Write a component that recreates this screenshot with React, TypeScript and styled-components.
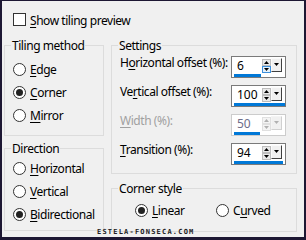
import React from "react";
import styled, { createGlobalStyle } from "styled-components";

const GlobalStyle = createGlobalStyle`
  html, body {
    margin: 0;
    padding: 0;
    background: #f0f0f0;
  }
`;

const Frame = styled.div`
  position: relative;
  width: 306px;
  height: 240px;
  box-sizing: border-box;
  border-style: solid;
  border-color: #1d1733;
  border-width: 1px 2px 3px 2px;
  background: #f0f0f0;
  overflow: hidden;
  font-family: "Noto Sans", "Segoe UI", sans-serif;
  font-size: 12px;
  letter-spacing: -0.45px;
  color: #000;
`;

const TopBar = styled.div`
  height: 37px;
  box-sizing: border-box;
  padding: 12px 0 0 11px;
`;

const CheckRow = styled.label`
  display: flex;
  align-items: flex-start;
  gap: 4px;
  line-height: 15px;
`;

const CheckBox = styled.span`
  width: 13px;
  height: 13px;
  box-sizing: border-box;
  border: 1px solid #333;
  background: #fff;
`;

const Columns = styled.div`
  display: grid;
  grid-template-columns: 100px 186px;
  column-gap: 7px;
  padding-left: 2px;
`;

const Column = styled.div`
  display: flex;
  flex-direction: column;
`;

const Group = styled.fieldset<{ $h: number; $top?: number }>`
  margin: ${(p) => p.$top ?? 0}px 0 0 0;
  padding: 0;
  height: ${(p) => p.$h}px;
  box-sizing: border-box;
  border: 1px solid #dcdcdc;
  min-inline-size: 0;
`;

const Legend = styled.legend`
  margin-left: 6px;
  padding: 0 1px;
  line-height: 15px;
  font-size: 12px;
`;

const Body = styled.div<{ $pt: number; $pl: number }>`
  padding: ${(p) => p.$pt}px 0 0 ${(p) => p.$pl}px;
`;

const Option = styled.label`
  display: flex;
  align-items: center;
  gap: 4px;
  height: 23px;
  line-height: 15px;
`;

const Radio = styled.span<{ $on?: boolean }>`
  display: grid;
  place-items: center;
  width: 13px;
  height: 13px;
  box-sizing: border-box;
  border: 1px solid #333;
  border-radius: 50%;
  background: #fff;

  &::after {
    content: "";
    width: 7px;
    height: 7px;
    border-radius: 50%;
    background: #222;
    display: ${(p) => (p.$on ? "block" : "none")};
  }
`;

const Key = styled.u`
  text-decoration: underline;
  text-underline-offset: 2px;
  text-decoration-thickness: 1px;
`;

const InlineOptions = styled.div`
  display: grid;
  grid-template-columns: 81px auto;
`;

const SettingRow = styled.div`
  display: grid;
  grid-template-columns: 111px 55px;
  height: 29px;
  align-items: start;
`;

const SettingLabel = styled.span<{ $off?: boolean }>`
  margin-top: 2px;
  line-height: 16px;
  white-space: nowrap;
  color: ${(p) => (p.$off ? "#a0a0a0" : "#000")};
`;

const Spin = styled.div<{ $off?: boolean }>`
  margin-top: 3px;
  width: 55px;
  height: 22px;
  box-sizing: border-box;
  border: 1px solid ${(p) => (p.$off ? "#cccccc" : "#7a7a7a")};
  background: #fff;
  padding: 1px 1px 0 1px;
  display: flex;
  flex-direction: column;
`;

const SpinTop = styled.div`
  display: flex;
  height: 15px;
  padding-right: 2px;
`;

const SpinValue = styled.span<{ $off?: boolean }>`
  flex: 1;
  padding-left: 4px;
  line-height: 13px;
  margin-top: 1px;
  letter-spacing: 0;
  color: ${(p) => (p.$off ? "#6d6d8a" : "#000")};
`;

const Arrows = styled.div`
  width: 9px;
  display: flex;
  flex-direction: column;
  margin-top: 1px;
`;

const ArrowBtn = styled.span<{ $hot?: boolean; $off?: boolean }>`
  height: 7px;
  box-sizing: border-box;
  display: grid;
  place-items: center;
  border: 1px solid ${(p) => (p.$hot ? "#3c8fdc" : p.$off ? "#e0e0e0" : "#bdbdbd")};
  background: ${(p) => (p.$hot ? "#e5f1fb" : p.$off ? "#f4f4f4" : "#e9e9e9")};
  color: ${(p) => (p.$off ? "#b0b0b0" : "#000")};
`;

const DropBtn = styled.span<{ $off?: boolean }>`
  width: 11px;
  height: 14px;
  box-sizing: border-box;
  display: flex;
  justify-content: center;
  padding-top: 4px;
  background: #f0f0f0;
  border-style: solid;
  border-width: 1px;
  border-color: ${(p) =>
    p.$off ? "#f4f4f4 #d0d0d0 #d0d0d0 #f4f4f4" : "#fafafa #404040 #404040 #fafafa"};
  color: ${(p) => (p.$off ? "#b0b0b0" : "#000")};
`;

const BarTrack = styled.div`
  height: 3px;
  margin: 1px 0 0 1px;
`;

const Bar = styled.div`
  height: 3px;
  background: #0078d7;
`;

const Watermark = styled.div`
  position: absolute;
  left: 95px;
  top: 227px;
  font-family: "DejaVu Sans Mono", monospace;
  font-weight: bold;
  font-size: 7px;
  line-height: 8px;
  letter-spacing: 1.2px;
  color: #1c1c24;
`;

const Tri = ({ down }: { down?: boolean }) => (
  <svg width="5" height="3" viewBox="0 0 5 3" style={{ display: "block" }}>
    <path d={down ? "M0 0H5L2.5 3Z" : "M0 3H5L2.5 0Z"} fill="currentColor" />
  </svg>
);

interface SpinProps {
  value: string;
  fill: number;
  off?: boolean;
  hot?: boolean;
}

const SpinBox = ({ value, fill, off, hot }: SpinProps) => (
  <Spin $off={off}>
    <SpinTop>
      <SpinValue $off={off}>{value}</SpinValue>
      <Arrows>
        <ArrowBtn $off={off}>
          <Tri />
        </ArrowBtn>
        <ArrowBtn $off={off} $hot={hot}>
          <Tri down />
        </ArrowBtn>
      </Arrows>
      <DropBtn $off={off}>
        <Tri down />
      </DropBtn>
    </SpinTop>
    <BarTrack>
      <Bar style={{ width: fill }} />
    </BarTrack>
  </Spin>
);

const RadioOption = ({
  on,
  k,
  rest,
}: {
  on?: boolean;
  k: string;
  rest: string;
}) => (
  <Option>
    <Radio $on={on} />
    <span>
      <Key>{k}</Key>
      {rest}
    </span>
  </Option>
);

export default function App() {
  return (
    <Frame>
      <GlobalStyle />
      <TopBar>
        <CheckRow>
          <CheckBox />
          <span>
            <Key>S</Key>how tiling preview
          </span>
        </CheckRow>
      </TopBar>
      <Columns>
        <Column>
          <Group $h={98}>
            <Legend>Tiling method</Legend>
            <Body $pt={5} $pl={8}>
              <RadioOption k="E" rest="dge" />
              <RadioOption on k="C" rest="orner" />
              <RadioOption k="M" rest="irror" />
            </Body>
          </Group>
          <Group $h={90} $top={5}>
            <Legend>Direction</Legend>
            <Body $pt={1} $pl={8}>
              <RadioOption k="H" rest="orizontal" />
              <RadioOption k="V" rest="ertical" />
              <RadioOption on k="B" rest="idirectional" />
            </Body>
          </Group>
        </Column>
        <Column>
          <Group $h={136}>
            <Legend>Settings</Legend>
            <Body $pt={0} $pl={8}>
              <SettingRow>
                <SettingLabel>
                  H<Key>o</Key>rizontal offset (%):
                </SettingLabel>
                <SpinBox value="6" fill={27} hot />
              </SettingRow>
              <SettingRow>
                <SettingLabel>
                  Ve<Key>r</Key>tical offset (%):
                </SettingLabel>
                <SpinBox value="100" fill={51} />
              </SettingRow>
              <SettingRow>
                <SettingLabel $off>
                  <Key>W</Key>idth (%):
                </SettingLabel>
                <SpinBox value="50" fill={26} off />
              </SettingRow>
              <SettingRow>
                <SettingLabel>
                  <Key>T</Key>ransition (%):
                </SettingLabel>
                <SpinBox value="94" fill={49} />
              </SettingRow>
            </Body>
          </Group>
          <Group $h={51} $top={7}>
            <Legend>Corner style</Legend>
            <Body $pt={3} $pl={23}>
              <InlineOptions>
                <RadioOption on k="L" rest="inear" />
                <Option>
                  <Radio />
                  <span>
                    C<Key>u</Key>rved
                  </span>
                </Option>
              </InlineOptions>
            </Body>
          </Group>
        </Column>
      </Columns>
      <Watermark>ESTELA-FONSECA.COM</Watermark>
    </Frame>
  );
}
